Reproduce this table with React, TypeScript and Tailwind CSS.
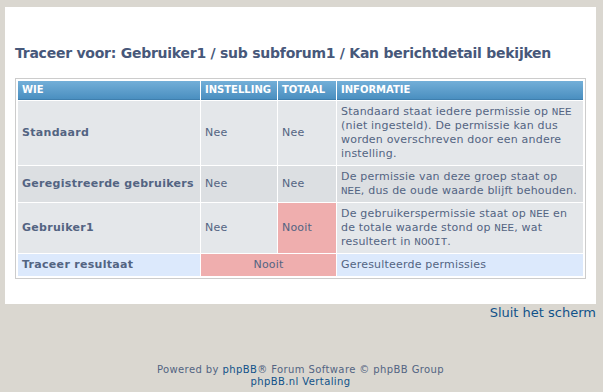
const rows = [
  {
    who: "Standaard",
    setting: "Nee",
    total: "Nee",
    bg: "bg-[#e4e7ea]",
    info: (
      <>
        Standaard staat iedere permissie op <Code>NEE</Code>
        <br />
        (niet ingesteld). De permissie kan dus
        <br />
        worden overschreven door een andere
        <br />
        instelling.
      </>
    ),
  },
  {
    who: "Geregistreerde gebruikers",
    setting: "Nee",
    total: "Nee",
    bg: "bg-[#dcdfe2]",
    info: (
      <>
        De permissie van deze groep staat op
        <br />
        <Code>NEE</Code>, dus de oude waarde blijft behouden.
      </>
    ),
  },
  {
    who: "Gebruiker1",
    setting: "Nee",
    total: "Nooit",
    bg: "bg-[#e4e7ea]",
    never: true,
    info: (
      <>
        De gebruikerspermissie staat op <Code>NEE</Code> en
        <br />
        de totale waarde stond op <Code>NEE</Code>, wat
        <br />
        resulteert in <Code>NOOIT</Code>.
      </>
    ),
  },
];

function Code({ children }: { children: React.ReactNode }) {
  return <span className="font-['Liberation_Mono',monospace] text-[11px] tracking-normal">{children}</span>;
}

const th = "px-[4px] bg-gradient-to-b from-[#73afd8] to-[#4a8fc0] border-b border-[#3f7fae]";

export default function App() {
  return (
    <div className="min-h-[392px] bg-[#dad7d0] pt-[7px] pl-[5px] pr-[7px] font-['DejaVu_Sans',Verdana,sans-serif] text-[#536482] text-[11px]">
      <div className="bg-white px-[10px] pt-[37px] pb-[25px]">
        <h1 className="font-bold text-[14px] leading-[18px] tracking-[-0.25px] text-[#47587a]">
          Traceer voor: Gebruiker1 / sub subforum1 / Kan berichtdetail bekijken
        </h1>

        <div className="mt-[16px] border border-[#cccccc] p-px">
          <table className="w-full table-fixed border-separate border-spacing-px leading-[14px] tracking-[0.2px]">
            <thead>
              <tr className="text-white text-[10px] font-bold text-left uppercase tracking-normal">
                <th className={`w-[182px] h-[19px] ${th}`}>Wie</th>
                <th className={`w-[76px] ${th}`}>Instelling</th>
                <th className={`w-[58px] ${th}`}>Totaal</th>
                <th className={th}>Informatie</th>
              </tr>
            </thead>
            <tbody>
              {rows.map((r) => (
                <tr key={r.who} className={r.bg}>
                  <td className="px-[4px] py-[4px] font-bold tracking-[0.3px] whitespace-nowrap">{r.who}</td>
                  <td className="px-[4px] py-[4px]">{r.setting}</td>
                  <td className={`px-[4px] py-[4px] ${r.never ? "bg-[#efaeae]" : ""}`}>{r.total}</td>
                  <td className="px-[4px] py-[4px] whitespace-nowrap">{r.info}</td>
                </tr>
              ))}
              <tr className="bg-[#dce9fc]">
                <td className="px-[4px] py-[4px] font-bold tracking-[0.3px] whitespace-nowrap">Traceer resultaat</td>
                <td colSpan={2} className="px-[4px] py-[4px] text-center bg-[#efaeae]">Nooit</td>
                <td className="px-[4px] py-[4px]">Geresulteerde permissies</td>
              </tr>
            </tbody>
          </table>
        </div>
      </div>

      <div className="text-right text-[13px] leading-[16px] pt-px">
        <a className="text-[#105289]">Sluit het scherm</a>
      </div>

      <div className="mt-[43px] text-center text-[10px] leading-[12px] tracking-[0.4px]">
        <p>
          Powered by <a className="text-[#105289]">phpBB</a>® Forum Software © phpBB Group
        </p>
        <p>
          <a className="text-[#105289]">phpBB.nl Vertaling</a>
        </p>
      </div>
    </div>
  );
}
